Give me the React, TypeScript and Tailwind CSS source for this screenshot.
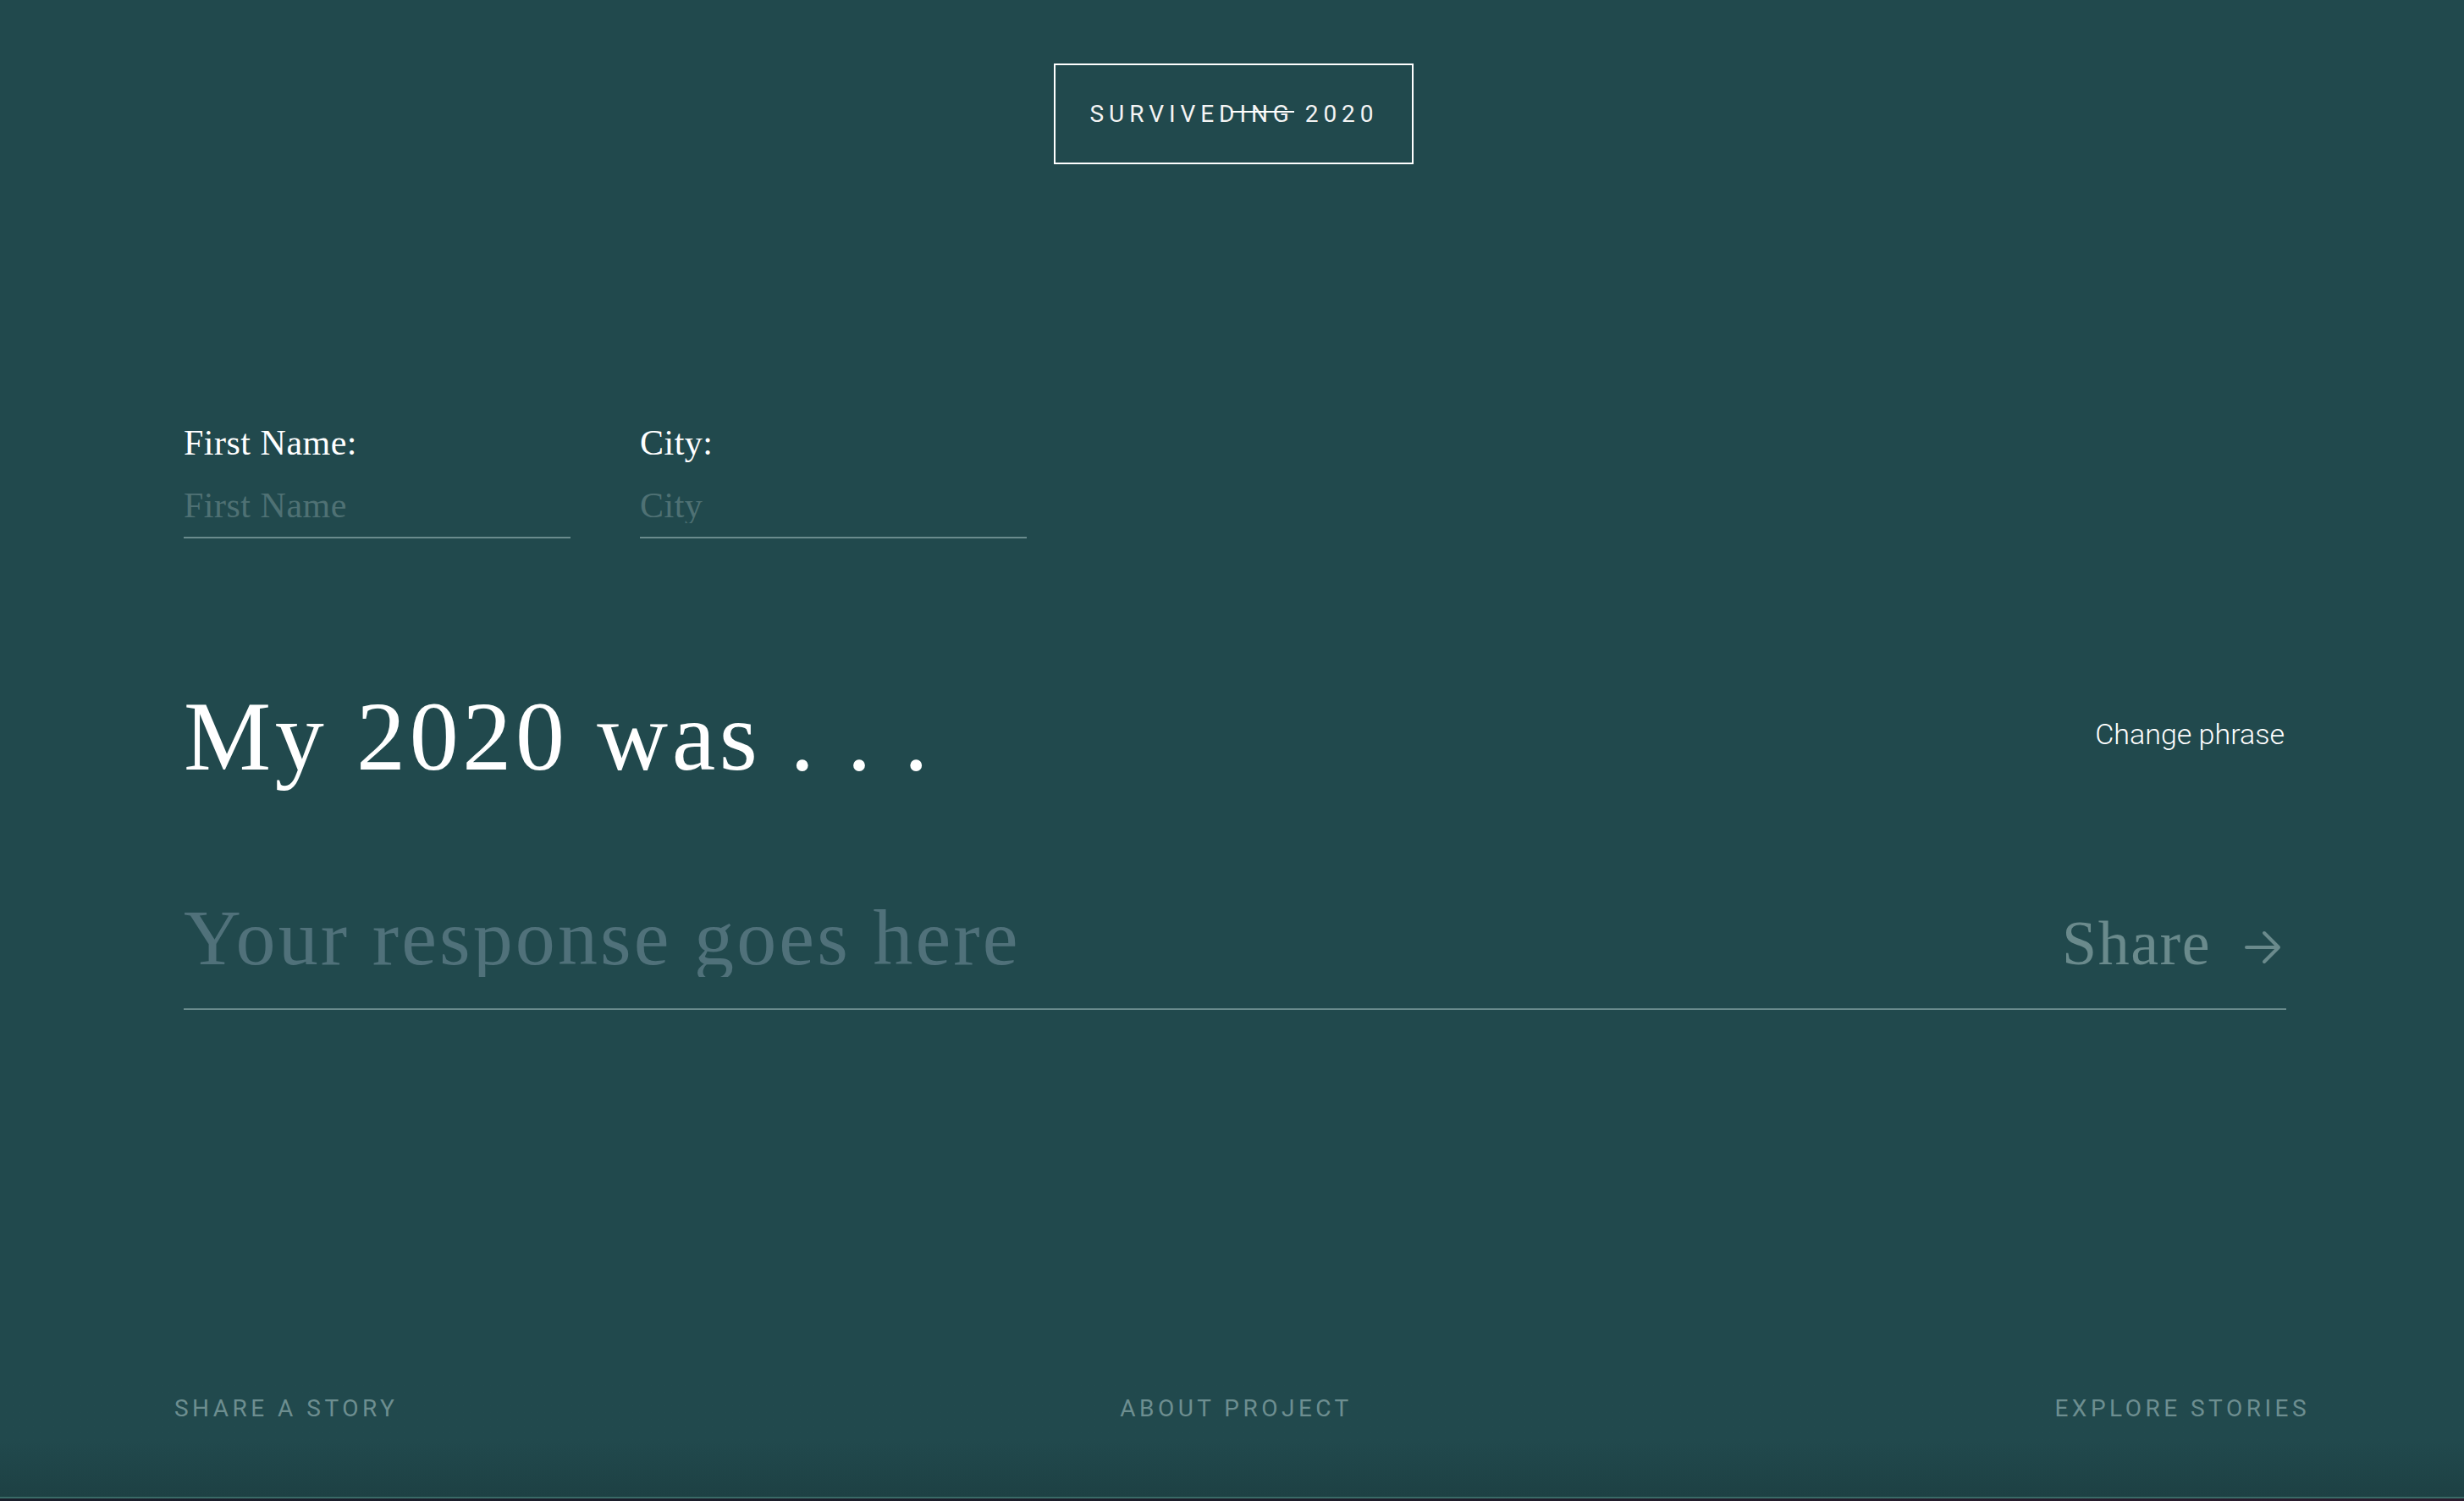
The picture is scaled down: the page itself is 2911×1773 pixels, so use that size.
import React from "react";

const serif = { fontFamily: '"Liberation Serif", "Times New Roman", serif' };

export default function App() {
  return (
    <div className="min-h-screen w-full bg-[#21494d] flex flex-col">
      {/* Header logo */}
      <div className="flex justify-center pt-[75px]">
        <div className="h-[119px] border-2 border-white flex items-center pl-[41px] pr-[40px] ml-[4px]">
          <span className="font-['Roboto',sans-serif] text-[28px] leading-none tracking-[0.212em] text-[#f4f4f4]">
            SURVIVED
            <span className="relative">
              ING
              <span className="absolute left-[-10px] right-0 top-[13px] h-[2px] bg-white" />
            </span>{" "}
            2020
          </span>
        </div>
      </div>

      {/* Main content */}
      <main className="pl-[217px] pr-[210px]">
        {/* Fields */}
        <div className="mt-[308px] flex gap-[82px]">
          <label className="w-[457px] flex flex-col gap-[32px]" style={serif}>
            <span className="text-[42px] leading-none text-white tracking-[0.012em]">First Name:</span>
            <div className="border-b-2 border-[#6a8b8d] pb-[16px]">
              <input
                type="text"
                placeholder="First Name"
                className="w-full h-[42px] leading-[42px] text-[42px] bg-transparent outline-none text-white tracking-[0.012em] placeholder:text-[#4f7174]"
                style={serif}
              />
            </div>
          </label>
          <label className="w-[457px] flex flex-col gap-[32px]" style={serif}>
            <span className="text-[42px] leading-none text-white tracking-[0.012em]">City:</span>
            <div className="border-b-2 border-[#6a8b8d] pb-[16px]">
              <input
                type="text"
                placeholder="City"
                className="w-full h-[42px] leading-[42px] text-[42px] bg-transparent outline-none text-white tracking-[0.012em] placeholder:text-[#4f7174]"
                style={serif}
              />
            </div>
          </label>
        </div>

        {/* Headline */}
        <div className="mt-[176px] flex items-center justify-between">
          <h1
            className="text-[116px] leading-none text-white tracking-[0.04em]"
            style={serif}
          >
            My 2020 was . . .
          </h1>
          <button className="font-['Roboto',sans-serif] font-light text-[34px] leading-none text-white mr-[2px] mb-[7px]">
            Change phrase
          </button>
        </div>

        {/* Response */}
        <div className="mt-[132px] flex items-baseline border-b-2 border-[#6a8b8d] pb-[37px]">
          <input
            type="text"
            placeholder="Your response goes here"
            className="flex-1 h-[94px] leading-[94px] text-[94px] bg-transparent outline-none text-white placeholder:text-[#50717a] tracking-[0.033em]"
            style={serif}
          />
          <button className="flex items-baseline gap-[40px] mr-[6px]">
            <span className="text-[74px] leading-none text-[#6a8a8c] tracking-[0.02em]" style={serif}>
              Share
            </span>
            <svg width="43" height="40" viewBox="0 0 43 40" fill="none" className="block">
              <path
                d="M2 20 H40 M23 3 L40 20 L23 37"
                stroke="#6a8a8c"
                strokeWidth="4"
                strokeLinecap="round"
                strokeLinejoin="round"
              />
            </svg>
          </button>
        </div>
      </main>

      {/* Footer */}
      <footer className="mt-auto bg-linear-to-b from-[#21494d] via-[#21494d] to-[#1d4043]">
        <div className="grid grid-cols-[1fr_auto_1fr] pl-[206px] pr-[182px] pt-[20px] pb-[90px] font-['Roboto',sans-serif] text-[28px] leading-none tracking-[0.16em] text-[#6d8e90]">
          <a className="justify-self-start">SHARE A STORY</a>
          <a className="justify-self-center mr-[14px]">ABOUT PROJECT</a>
          <a className="justify-self-end">EXPLORE STORIES</a>
        </div>
        <div className="h-[2px] bg-[#3a6a66]" />
        <div className="h-[3px] bg-linear-to-r from-[#1a1f2c] via-[#1c1d2a] to-[#2b1c2e]" />
      </footer>
    </div>
  );
}
